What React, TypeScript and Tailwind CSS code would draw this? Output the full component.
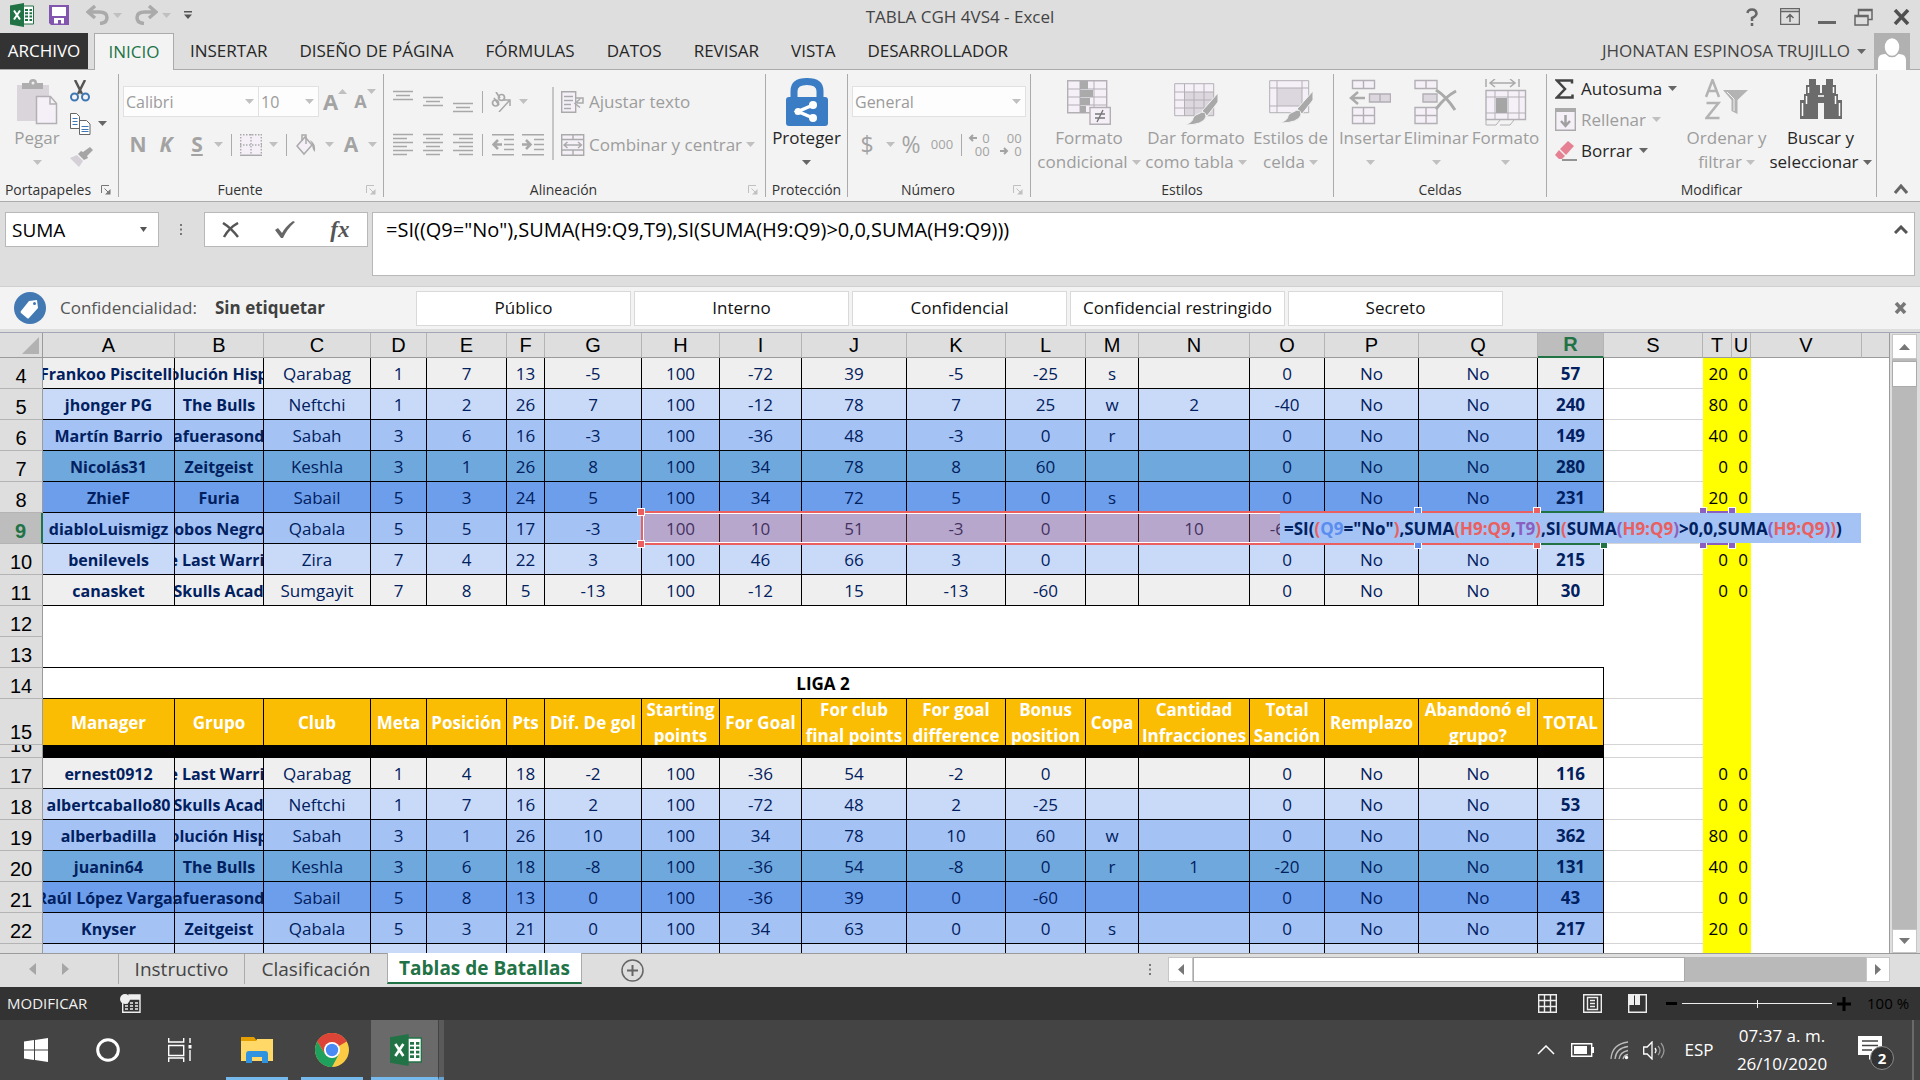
import React from 'react';

type Kids = { children?: React.ReactNode };

/* ---------- small shared parts ---------- */

function Caret({ dark = false }: { dark?: boolean }) {
  return (
    <svg width="9" height="5" viewBox="0 0 9 5" className="shrink-0" aria-hidden="true">
      <path d="M0 0h9L4.5 5z" fill={dark ? '#666' : '#c0c0c0'} />
    </svg>
  );
}

function Svg({ w, h, children }: Kids & { w: number; h: number }) {
  return (
    <svg width={w} height={h} viewBox={`0 0 ${w} ${h}`} fill="none" className="shrink-0" aria-hidden="true">
      {children}
    </svg>
  );
}

function ExcelLogo({ w, h }: { w: number; h: number }) {
  return (
    <svg width={w} height={h} viewBox="0 0 24 24" fill="none" className="shrink-0" aria-hidden="true">
      <path d="M13 3h10.500v18H13z" fill="#fff" stroke="#217346" strokeWidth="1" />
      <path d="M15 6h3v2h-3zM19.500 6h2.500v2h-2.500zM15 9.300h3v2h-3zM19.500 9.300h2.500v2h-2.500zM15 12.600h3v2h-3zM19.500 12.600h2.500v2h-2.500zM15 16h3v2h-3zM19.500 16h2.500v2h-2.500z" fill="#217346" />
      <path d="M0 2.500L14 0v24L0 21.500z" fill="#217346" />
      <path d="M4 7.500l6 9M10 7.500l-6 9" stroke="#fff" strokeWidth="2" />
    </svg>
  );
}

/* ---------- title bar ---------- */

function TitleBar() {
  return (
    <header className="grid h-[33px] shrink-0 grid-cols-[1fr_auto_1fr] items-center">
      <div className="flex items-center pl-[10px] pb-[3px]">
        <ExcelLogo w={24} h={24} />
        <button aria-label="Guardar" className="ml-[15px]">
          <Svg w={20} h={20}>
            <path d="M0 0h20v20H2l-2-2z" fill="#8255ae" />
            <path d="M3 2h14v9H3zM5 13h10v5.500H5z" fill="#fff" />
            <path d="M9 15h3v4H9z" fill="#8255ae" />
          </Svg>
        </button>
        <button aria-label="Deshacer" className="ml-[17px] flex items-center gap-1">
          <Svg w={23} h={20}>
            <path d="M9 1L2 7l7 6M3 7h10q8 0 8 5.500T14 18.500" stroke="#aaa" strokeWidth="3.500" />
          </Svg>
          <Caret />
        </button>
        <button aria-label="Rehacer" className="ml-[13px] flex items-center gap-1">
          <Svg w={23} h={20}>
            <path d="M14 1l7 6-7 6M20 7H10q-8 0-8 5.500T9 18.500" stroke="#aaa" strokeWidth="3.500" />
          </Svg>
          <Caret />
        </button>
        <button aria-label="Personalizar barra de acceso rápido" className="ml-[13px]">
          <Svg w={8} h={8}>
            <path d="M0 0h8v1.500H0zM0 3.500h8L4 8z" fill="#555" />
          </Svg>
        </button>
      </div>
      <h1 className="text-[17px] leading-6 text-[#444]">TABLA CGH 4VS4 - Excel</h1>
      <div className="flex items-center justify-end pr-[10px]">
        <button aria-label="Ayuda" className="mr-[22px]">
          <Svg w={12} h={18}>
            <path d="M1.500 5Q2 1.500 6 1.500T10.500 5.500Q10.500 8 6 10v3M6 15v3" stroke="#666" strokeWidth="2.500" />
          </Svg>
        </button>
        <button aria-label="Opciones de presentación de la cinta" className="mr-[18px]">
          <Svg w={20} h={17}>
            <path d="M.5.5h19v16H.5zM1 3.500h18M10 14V7M6.500 10L10 6.500 13.500 10" stroke="#666" strokeWidth="1.500" />
          </Svg>
        </button>
        <button aria-label="Minimizar" className="mr-[18px]">
          <Svg w={18} h={18}>
            <path d="M0 13h18v3H0z" fill="#666" />
          </Svg>
        </button>
        <button aria-label="Restaurar" className="mr-[20px]">
          <Svg w={19} h={18}>
            <path d="M1 7.500h13v9.500H1zM4.500 7V1.500h13.500v10H14M1 8.500h13M5 2.500h13" stroke="#666" strokeWidth="1.500" />
          </Svg>
        </button>
        <button aria-label="Cerrar">
          <Svg w={17} h={16}>
            <path d="M2 1l13 14M15 1L2 15" stroke="#505050" strokeWidth="3.500" />
          </Svg>
        </button>
      </div>
    </header>
  );
}

const ribbonTabs = ['INSERTAR', 'DISEÑO DE PÁGINA', 'FÓRMULAS', 'DATOS', 'REVISAR', 'VISTA', 'DESARROLLADOR'];

function RibbonTabs() {
  return (
    <nav className="flex h-[37px] shrink-0 items-stretch border-b border-[#ababab] text-[17px] text-[#262626]">
      <button className="w-[88px] bg-[#333] text-white">ARCHIVO</button>
      <button className="-mb-px ml-[6px] w-[80px] border border-b-0 border-[#ababab] bg-[#f3f3f3] text-[#217346]">INICIO</button>
      {ribbonTabs.map((t) => (
        <button key={t} className="px-4 whitespace-nowrap">
          {t}
        </button>
      ))}
      <button className="mr-[8px] ml-auto flex items-center gap-[7px] text-[17px] whitespace-nowrap text-[#444]">
        JHONATAN ESPINOSA TRUJILLO
        <Caret dark />
      </button>
      <div className="mr-[10px] -mb-px w-[36px] bg-[#b1b1b1]">
        <Svg w={36} h={37}>
          <path d="M4 37V27q0-6 7-6h14q7 0 7 6v10z" fill="#fff" />
          <ellipse cx="18" cy="14" rx="8" ry="9.500" fill="#fff" stroke="#b1b1b1" strokeWidth="1.500" />
        </Svg>
      </div>
    </nav>
  );
}

/* ---------- ribbon ---------- */

function Launcher({ dark = false }: { dark?: boolean }) {
  const c = dark ? '#777' : '#c0c0c0';
  return (
    <button aria-label="Más opciones" className="absolute right-[7px] bottom-[2px]">
      <Svg w={10} h={10}>
        <path d="M.5 8V.5H8M3.500 3.500L8 8" stroke={c} />
        <path d="M9.500 4v5.500H4z" fill={c} />
      </Svg>
    </button>
  );
}

function Group({ name, width, launcher, children }: Kids & { name: string; width: string; launcher?: 'dark' | 'light' }) {
  return (
    <section aria-label={name} className={`flex shrink-0 py-[4px] ${width}`}>
      <div className="relative flex min-w-0 flex-1 flex-col border-r border-[#ababab]">
        <div className="flex flex-1">{children}</div>
        <div className={`text-center text-[14px] leading-[14px] text-[#333] ${launcher ? 'pr-[22px]' : ''}`}>{name}</div>
        {launcher && <Launcher dark={launcher === 'dark'} />}
      </div>
    </section>
  );
}

function BigButton({ icon, top, bottom, width, dark = false }: { icon: React.ReactNode; top: string; bottom?: string; width: string; dark?: boolean }) {
  return (
    <button className={`flex shrink-0 flex-col items-center pt-[4px] text-[17px] leading-6 whitespace-nowrap ${dark ? 'text-[#262626]' : 'text-[#9d9d9d]'} ${width}`}>
      <span className="flex h-12 items-center">{icon}</span>
      <span>{top}</span>
      <span className="flex h-6 items-center gap-[4px]">
        {bottom}
        <Caret dark={dark} />
      </span>
    </button>
  );
}

function Cell({ label, width, children }: Kids & { label: string; width: string }) {
  return (
    <button aria-label={label} className={`flex h-8 shrink-0 items-center justify-center text-[#a3a3a3] ${width}`}>
      {children}
    </button>
  );
}

function Sep() {
  return <span className="h-[22px] w-px shrink-0 bg-[#ababab]" />;
}

function Lines({ rows, y = 1 }: { rows: number[][]; y?: number }) {
  return (
    <Svg w={20} h={24}>
      <path d={rows.map(([x, w], i) => `M${x} ${y + i * 4}.5h${w}`).join('')} stroke="#a8a8a8" strokeWidth="1.500" />
    </Svg>
  );
}

function Select({ label, value, width }: { label: string; value: string; width: string }) {
  return (
    <span className={`flex h-[31px] items-center border border-[#e1e1e1] bg-[#fdfdfd] pr-[4px] ${width}`}>
      <select aria-label={label} className="min-w-0 flex-1 appearance-none pl-[2px] text-[16px] leading-6 text-[#9b9b9b] outline-none">
        <option>{value}</option>
      </select>
      <Caret />
    </span>
  );
}

const pale = '#f5f0f8';
const line = '#b3afb5';

const icons = {
  paste: (
    <Svg w={42} h={46}>
      <path d="M1 6h32v36H1z" fill="#d9d5db" />
      <path d="M6 10V4h7q0-4 4-4t4 4h6v6z" fill="#aeaeae" />
      <circle cx="17" cy="4" r="1.500" fill="#eee" />
      <path d="M20.500 17.500h14l6 7v20h-20zM34 18v7h6" fill={pale} stroke={line} strokeWidth="1.500" />
    </Svg>
  ),
  cut: (
    <Svg w={20} h={22}>
      <path d="M5 0l7 14M15 0L8 14" stroke="#555" strokeWidth="2.500" />
      <circle cx="4.500" cy="17" r="3.500" stroke="#3e78b4" strokeWidth="2" />
      <circle cx="15.500" cy="17" r="3.500" stroke="#3e78b4" strokeWidth="2" />
    </Svg>
  ),
  copy: (
    <Svg w={21} h={22}>
      <path d="M.5.5h6l3 3v12h-9z" fill="#fff" stroke="#666" />
      <path d="M2.500 5.500h5M2.500 8.500h5M2.500 11.500h5" stroke="#3e78b4" />
      <path d="M9.500 7.500h7l3.500 3.500v10.500H9.500z" fill="#fff" stroke="#666" />
      <path d="M11.500 13.500h7M11.500 16.500h7M11.500 18.500h7" stroke="#3e78b4" />
    </Svg>
  ),
  brush: (
    <Svg w={23} h={20}>
      <path d="M20 0l3 3-6 6 1 2-4 2-6-6 3-3 2 1z" fill="#a5a5a5" />
      <path d="M7 8l6 6-4 6-9-9z" fill="#d5d0d7" />
    </Svg>
  ),
  lock: (
    <Svg w={42} h={48}>
      <path d="M8 22V13Q8 3.500 21 3.500t13 9.500v9" stroke="#3a7dc5" strokeWidth="7" />
      <rect y="19" width="42" height="29" rx="3" fill="#3a7dc5" />
      <path d="M27 27l-15 6.500L27 40" stroke="#fff" strokeWidth="3.500" />
      <circle cx="27" cy="27" r="4" fill="#fff" />
      <circle cx="27" cy="40" r="4" fill="#fff" />
      <circle cx="12" cy="33.500" r="3.500" fill="#fff" />
    </Svg>
  ),
  conditional: (
    <Svg w={44} h={45}>
      <path d="M.7.700h39v32H.7z" fill={pale} stroke={line} strokeWidth="1.400" />
      <path d="M.7 9h39M.7 17h39M.7 25h39M13 .7v32M27 .7v32" stroke={line} />
      <path d="M13 1h8v8h-8zM13 10h13v7H13zM13 18h10v7H13zM13 26h6v7h-6z" fill="#aaa" />
      <path d="M23 27.500h20.300v16.800H23z" fill={pale} stroke={line} strokeWidth="1.400" />
      <path d="M28 34h10M28 38h10M36 30l-6 12" stroke="#777" strokeWidth="1.400" />
    </Svg>
  ),
  tableFormat: (
    <Svg w={44} h={45}>
      <path d="M.7 3.700h39v32H.7z" fill={pale} />
      <path d="M11 12h29v24H11z" fill="#dcd7de" />
      <path d="M.7 3.700h39v32H.7zM.7 12h39M.7 20h39M.7 28h39M10.500 4v32M20 4v32M30 4v32" stroke={line} />
      <path d="M44 13v9L33 36l-5-5z" fill="#a9a9a9" stroke="#f3f3f3" />
      <path d="M24 34q8-5 8 3-3 8-21 8 8-3 8-7 1-3 5-4z" fill="#a9a9a9" stroke="#f3f3f3" />
    </Svg>
  ),
  cellStyle: (
    <Svg w={44} h={45}>
      <path d="M.7.700h39v32H.7z" fill={pale} />
      <path d="M8 8h25v18H8z" fill="#dcd7de" />
      <path d="M.7.700h39v32H.7zM.7 8h39M8 1v32M.7 26h39M33 1v32" stroke={line} />
      <path d="M44 11v9L33 34l-5-5z" fill="#a9a9a9" stroke="#f3f3f3" />
      <path d="M24 32q8-5 8 3-3 8-21 8 8-3 8-7 1-3 5-4z" fill="#a9a9a9" stroke="#f3f3f3" />
    </Svg>
  ),
  insert: (
    <Svg w={42} h={46}>
      <path d="M3.500 1.500h22v8h-22zM14.500 1.500v8M3.500 28.500h22v16h-22zM14.500 28.500v16M3.500 36.500h22" fill={pale} stroke={line} strokeWidth="1.400" />
      <path d="M20.500 15h21v8h-21zM31 15v8" fill="#dcd7de" stroke={line} strokeWidth="1.400" />
      <path d="M16 19H3M9 13l-7 6 7 6" stroke="#aaa" strokeWidth="2.500" />
    </Svg>
  ),
  remove: (
    <Svg w={44} h={46}>
      <path d="M1 1.500h22v8H1zM12 1.500v8M1 28.500h22v16H1zM12 28.500v16M1 36.500h22" fill={pale} stroke={line} strokeWidth="1.400" />
      <path d="M9 15h14v8H9z" fill="#dcd7de" stroke={line} strokeWidth="1.400" />
      <path d="M22 11q10 6 19 20M42 12Q31 18 22 30" stroke="#aaa" strokeWidth="3" />
    </Svg>
  ),
  format: (
    <Svg w={42} h={47}>
      <path d="M1 0v8M34 0v8M5 4h25M10 0L5 4l5 4M25 0l5 4-5 4" stroke="#aaa" strokeWidth="1.500" />
      <path d="M1 11.500h39.500v29H1z" fill={pale} stroke={line} strokeWidth="1.400" />
      <path d="M1 18h39M1 34h39M10 11v29M23 11v29M34 11v29" stroke={line} />
      <path d="M11 19h11v15H11z" fill="#a5a5a5" />
      <path d="M1 41v5h10l4-5M15 46h10l4-5" stroke={line} />
    </Svg>
  ),
  sortFilter: (
    <Svg w={43} h={46}>
      <path d="M1 18L7.500 1 14 18M3.500 12h8M1.500 24h12l-12 15h13" stroke="#b3b3b3" strokeWidth="2.500" />
      <path d="M18 11h25L32.500 21v14l-6-3V21z" fill="#b3b3b3" />
      <path d="M22 13l7 7v12" stroke="#f3f3f3" />
    </Svg>
  ),
  binoculars: (
    <Svg w={42} h={46}>
      <path d="M9 0h7v6h4v8h2V6h4V0h7v6h3v9h2v6h4v19H24V24h-6v16H0V21h4v-6h2V6h3z" fill="#6b6b6b" />
      <path d="M2.500 24v13M39.500 24v13M6.500 17v8M35.500 17v8M8.500 8v6M33.500 8v6M18 17h6" stroke="#fff" strokeWidth="1.500" />
    </Svg>
  ),
};

function ToolRow({ icon, text, dark = true }: { icon: React.ReactNode; text: string; dark?: boolean }) {
  return (
    <button className={`flex h-[31px] items-center whitespace-nowrap ${dark ? 'text-[#262626]' : 'text-[#9d9d9d]'}`}>
      <span className="flex w-[26px] items-center">{icon}</span>
      <span className="mr-[6px]">{text}</span>
      <Caret dark={dark} />
    </button>
  );
}

function Ribbon() {
  return (
    <div className="flex h-[132px] shrink-0 border-b border-[#ababab] bg-[#f3f3f3]">
      <Group name="Portapapeles" width="w-[119px]" launcher="dark">
        <BigButton icon={icons.paste} top="Pegar" width="ml-[4px] w-[66px]" />
        <div className="flex flex-col">
          <button aria-label="Cortar" className="flex h-[33px] items-center">{icons.cut}</button>
          <button aria-label="Copiar" className="flex h-[33px] items-center gap-[7px]">
            {icons.copy}
            <Caret dark />
          </button>
          <button aria-label="Copiar formato" className="flex h-[33px] items-center">{icons.brush}</button>
        </div>
      </Group>

      <Group name="Fuente" width="w-[265px]" launcher="light">
        <div className="flex flex-col pt-[6px]">
          <div className="flex h-[43px] items-center pl-[4px]">
            <Select label="Fuente" value="Calibri" width="w-[136px]" />
            <Select label="Tamaño de fuente" value="10" width="-ml-px w-[61px]" />
            <Cell label="Aumentar tamaño" width="w-[32px]">
              <span className="text-[22px] font-bold">A</span>
              <span className="mb-5 rotate-180"><Caret /></span>
            </Cell>
            <Cell label="Reducir tamaño" width="w-[28px]">
              <span className="text-[18px] font-bold">A</span>
              <span className="mb-5"><Caret /></span>
            </Cell>
          </div>
          <div className="flex h-[43px] items-center pl-[5px] text-[21px] font-bold">
            <Cell label="Negrita" width="w-[28px]">N</Cell>
            <Cell label="Cursiva" width="w-[28px] italic">K</Cell>
            <Cell label="Subrayado" width="w-[34px] underline">S</Cell>
            <Caret />
            <span className="w-[8px]" />
            <Sep />
            <Cell label="Bordes" width="w-[37px]">
              <Svg w={22} h={22}>
                <path d="M.5.500h21v21H.5z" fill={pale} />
                <path d="M.7 0v21M21.300 0v21M11 0v21M0 .7h22M0 11h22" stroke="#aaa" strokeWidth="1.400" strokeDasharray="1.500 1.500" />
                <path d="M0 21.300h22" stroke="#aaa" strokeWidth="1.500" />
              </Svg>
            </Cell>
            <Caret />
            <span className="w-[8px]" />
            <Sep />
            <Cell label="Color de relleno" width="w-[38px]">
              <Svg w={20} h={22}>
                <path d="M1 12L9 3l7 8-8 9z" fill={pale} stroke="#aaa" strokeWidth="1.500" />
                <path d="M6 7V1h4v9" stroke="#aaa" strokeWidth="1.500" />
                <path d="M14 6q6 3 5 12-3-3-3-8z" fill="#aaa" />
              </Svg>
            </Cell>
            <Caret />
            <Cell label="Color de fuente" width="w-[34px]">A</Cell>
            <Caret />
          </div>
        </div>
      </Group>

      <Group name="Alineación" width="w-[382px]" launcher="light">
        <div className="flex pt-[6px]">
          <div className="w-[168px] pl-[4px]">
            <div className="flex h-[43px] items-center">
              <Cell label="Alinear arriba" width="w-[30px]"><Lines y={1} rows={[[0, 20], [3, 14], [0, 20]]} /></Cell>
              <Cell label="Alinear en el medio" width="w-[30px]"><Lines y={7} rows={[[0, 20], [3, 14], [0, 20]]} /></Cell>
              <Cell label="Alinear abajo" width="w-[30px]"><Lines y={13} rows={[[0, 20], [3, 14], [0, 20]]} /></Cell>
              <span className="w-[4px]" />
              <Sep />
              <Cell label="Orientación" width="w-[36px]">
                <Svg w={20} h={20}>
                  <path d="M8 20L18 9M13 8l6 0v6" stroke="#a8a8a8" strokeWidth="1.500" />
                  <circle cx="4.500" cy="11" r="3" stroke="#a8a8a8" strokeWidth="1.700" />
                  <circle cx="10.500" cy="5.500" r="3" stroke="#a8a8a8" strokeWidth="1.700" />
                  <path d="M3 6l5 7M5 0l4 6" stroke="#a8a8a8" strokeWidth="1.700" />
                </Svg>
              </Cell>
              <Caret />
            </div>
            <div className="flex h-[43px] items-center">
              <Cell label="Alinear a la izquierda" width="w-[30px]"><Lines rows={[[0, 20], [0, 14], [0, 20], [0, 14], [0, 20], [0, 14]]} /></Cell>
              <Cell label="Centrar" width="w-[30px]"><Lines rows={[[0, 20], [3, 14], [0, 20], [3, 14], [0, 20], [3, 14]]} /></Cell>
              <Cell label="Alinear a la derecha" width="w-[30px]"><Lines rows={[[0, 20], [6, 14], [0, 20], [6, 14], [0, 20], [6, 14]]} /></Cell>
              <span className="w-[4px]" />
              <Sep />
              <span className="w-[5px]" />
              <Cell label="Disminuir sangría" width="w-[30px]">
                <Svg w={22} h={22}>
                  <path d="M0 .7h22M12 5.500h10M12 10.500h10M12 15.500h10M0 20.700h22" stroke="#a8a8a8" strokeWidth="1.400" />
                  <path d="M10 10.500H2M6 6l-4.500 4.500L6 15" stroke="#a8a8a8" strokeWidth="2.500" />
                </Svg>
              </Cell>
              <Cell label="Aumentar sangría" width="w-[30px]">
                <Svg w={22} h={22}>
                  <path d="M0 .7h22M12 5.500h10M12 10.500h10M12 15.500h10M0 20.700h22" stroke="#a8a8a8" strokeWidth="1.400" />
                  <path d="M0 10.500h8M4 6l4.500 4.500L4 15" stroke="#a8a8a8" strokeWidth="2.500" />
                </Svg>
              </Cell>
            </div>
          </div>
          <span className="mt-[7px] h-[73px] w-[2px] bg-[#c6c6c6]" />
          <div className="pl-[7px] text-[17px] text-[#9d9d9d]">
            <button className="flex h-[43px] items-center gap-[4px] whitespace-nowrap">
              <Svg w={24} h={22}>
                <path d="M.7.700h14v20.600H.7z" fill={pale} stroke="#aaa" strokeWidth="1.400" />
                <path d="M3 5.500h9M3 9.500h9M3 13.500h7M3 17.500h7M14 7h8v5h-6M19 8l-5 4.500 5 4" stroke="#aaa" strokeWidth="1.500" />
              </Svg>
              Ajustar texto
            </button>
            <button className="flex h-[43px] items-center gap-[4px] whitespace-nowrap">
              <Svg w={24} h={22}>
                <path d="M.7.700h22v20.600H.7zM.7 5.500h22M.7 16h22M12 1v5M12 16v5" fill={pale} stroke="#aaa" strokeWidth="1.400" />
                <path d="M3 11h17M6.500 8L3 11l3.500 3M17 8l3.500 3-3.500 3" stroke="#aaa" strokeWidth="1.400" />
              </Svg>
              Combinar y centrar
              <Caret />
            </button>
          </div>
        </div>
      </Group>

      <Group name="Protección" width="w-[82px]">
        <BigButton icon={icons.lock} top="Proteger" width="w-full" dark />
      </Group>

      <Group name="Número" width="w-[183px]" launcher="light">
        <div className="flex flex-col pt-[6px]">
          <div className="flex h-[43px] items-center pl-[4px]">
            <Select label="Formato de número" value="General" width="w-[174px]" />
          </div>
          <div className="flex h-[43px] items-center text-[23px]">
            <Cell label="Formato de número de contabilidad" width="w-[38px]">$</Cell>
            <Caret />
            <Cell label="Estilo porcentual" width="w-[32px]">%</Cell>
            <Cell label="Estilo millares" width="w-[30px] text-[13px]">000</Cell>
            <span className="w-[4px]" />
            <Sep />
            <Cell label="Aumentar decimales" width="w-[34px]">
              <span className="flex flex-col items-end text-[13px] leading-[13px]">
                <span className="flex items-center gap-[5px]">
                  <Svg w={9} h={8}><path d="M9 4H2M5 1L2 4l3 3" stroke="#a3a3a3" strokeWidth="2" /></Svg>0
                </span>
                <span>00</span>
              </span>
            </Cell>
            <Cell label="Disminuir decimales" width="w-[30px]">
              <span className="flex flex-col items-end text-[13px] leading-[13px]">
                <span>00</span>
                <span className="flex items-center gap-[5px]">
                  <Svg w={9} h={8}><path d="M0 4h7M4 1l3 3-3 3" stroke="#a3a3a3" strokeWidth="2" /></Svg>0
                </span>
              </span>
            </Cell>
          </div>
        </div>
      </Group>

      <Group name="Estilos" width="w-[303px]">
        <BigButton icon={icons.conditional} top="Formato" bottom="condicional" width="ml-[3px] w-[110px]" />
        <BigButton icon={icons.tableFormat} top="Dar formato" bottom="como tabla" width="w-[104px]" />
        <BigButton icon={icons.cellStyle} top="Estilos de" bottom="celda" width="w-[85px]" />
      </Group>

      <Group name="Celdas" width="w-[213px]">
        <BigButton icon={icons.insert} top="Insertar" width="ml-[3px] w-[66px]" />
        <BigButton icon={icons.remove} top="Eliminar" width="w-[66px]" />
        <BigButton icon={icons.format} top="Formato" width="w-[73px]" />
      </Group>

      <Group name="Modificar" width="w-[330px]">
        <div className="-mt-px flex w-[137px] flex-col pl-[8px] text-[17px]">
          <ToolRow
            text="Autosuma"
            icon={
              <Svg w={19} h={20}>
                <path d="M17 4.500V1.500H2l8 8.500-8 8.500h15.500v-3" stroke="#444" strokeWidth="2.500" />
              </Svg>
            }
          />
          <ToolRow
            text="Rellenar"
            dark={false}
            icon={
              <Svg w={21} h={23}>
                <path d="M.7.700h19.600v21.600H.7z" fill={pale} stroke="#aaa" strokeWidth="1.400" />
                <path d="M0 0h21v4H0z" fill="#aaa" />
                <path d="M10.500 7v11M6 13l4.500 5 4.500-5" stroke="#a0a0a0" strokeWidth="2.500" />
              </Svg>
            }
          />
          <ToolRow
            text="Borrar"
            icon={
              <Svg w={22} h={20}>
                <path d="M13 0l6 5-8 9-6-6z" fill="#e68193" />
                <path d="M4 9l6 6-3 3H4l-4-4z" fill="#e68193" />
                <path d="M7 19h15" stroke="#555" strokeWidth="1.200" />
              </Svg>
            }
          />
        </div>
        <BigButton icon={icons.sortFilter} top="Ordenar y" bottom="filtrar" width="w-[85px]" />
        <BigButton icon={icons.binoculars} top="Buscar y" bottom="seleccionar" width="w-[103px]" dark />
      </Group>

      <button aria-label="Contraer la cinta" className="ml-auto flex items-end pr-[12px] pb-[7px]">
        <Svg w={14} h={10}>
          <path d="M1 9l6-7 6 7" stroke="#666" strokeWidth="3" />
        </Svg>
      </button>
    </div>
  );
}

/* ---------- formula bar ---------- */

function Dots() {
  return (
    <Svg w={3} h={11}>
      <path d="M0 0h2v2H0zM0 4.500h2v2H0zM0 9h2v2H0z" fill="#777" />
    </Svg>
  );
}

function FormulaBar() {
  return (
    <div className="flex h-[84px] shrink-0 items-start px-[5px] pt-[10px]">
      <div className="flex h-[35px] w-[154px] items-center border border-[#b8b8b8] bg-white pr-[11px]">
        <input aria-label="Cuadro de nombres" defaultValue="SUMA" className="min-w-0 flex-1 pl-[6px] text-[19px] leading-[28px] text-black outline-none" />
        <button aria-label="Nombres definidos">
          <Svg w={7} h={5}><path d="M0 0h7L3.500 5z" fill="#555" /></Svg>
        </button>
      </div>
      <div className="flex h-[35px] w-[45px] items-center justify-center"><Dots /></div>
      <div className="flex h-[35px] w-[164px] items-center justify-around border border-[#b8b8b8] bg-white">
        <button aria-label="Cancelar">
          <Svg w={18} h={16}><path d="M1 1q8 5 15 14M16 1Q7 6 2 15" stroke="#555" strokeWidth="2.500" /></Svg>
        </button>
        <button aria-label="Introducir">
          <Svg w={20} h={18}><path d="M0 9l3-2 4 5Q11 5 18 0l2 1Q12 8 8 17H6z" fill="#666" /></Svg>
        </button>
        <button aria-label="Insertar función" className="font-[Liberation_Serif,serif] text-[23px] leading-6 font-bold text-[#555] italic">fx</button>
      </div>
      <div className="ml-[4px] flex h-[64px] flex-1 items-start border border-[#b8b8b8] bg-white">
        <textarea
          aria-label="Barra de fórmulas"
          className="h-full flex-1 resize-none overflow-hidden pt-[3px] pl-[13px] text-[20px] leading-[28px] text-black outline-none"
          defaultValue={'=SI((Q9="No"),SUMA(H9:Q9,T9),SI(SUMA(H9:Q9)>0,0,SUMA(H9:Q9)))'}
        />
        <button aria-label="Contraer barra de fórmulas" className="mt-[12px] mr-[6px]">
          <Svg w={14} h={9}><path d="M1 8l6-6 6 6" stroke="#555" strokeWidth="3" /></Svg>
        </button>
      </div>
    </div>
  );
}

const labels = ['Público', 'Interno', 'Confidencial', 'Confidencial restringido', 'Secreto'];

function SensitivityBar() {
  return (
    <div className="flex h-[43px] shrink-0 items-center border-t border-[#d0d0d0] bg-[#f3f3f3] pr-[13px] pl-[14px] text-[17px]">
      <Svg w={32} h={32}>
        <circle cx="16" cy="16" r="16" fill="#4379b3" />
        <path d="M15 9l8-1 1 8-9 10q-1 1-2 0l-6-5q-1-1 0-2z" fill="#fff" />
        <circle cx="20.500" cy="11.500" r="1.500" fill="#4379b3" />
      </Svg>
      <span className="ml-[14px] w-[155px] text-[#555]">Confidencialidad:</span>
      <span className="w-[201px] font-bold text-[#404040]">Sin etiquetar</span>
      <div className="flex gap-[3px]">
        {labels.map((l) => (
          <button key={l} className="h-[35px] w-[215px] border border-[#d9d9d9] bg-white whitespace-nowrap text-[#111]">
            {l}
          </button>
        ))}
      </div>
      <button aria-label="Cerrar barra" className="ml-auto">
        <Svg w={13} h={12}><path d="M2 1l9 10M11 1L2 11" stroke="#777" strokeWidth="3.500" /></Svg>
      </button>
    </div>
  );
}

/* ---------- sheet ---------- */

const widths = [43, 132, 89, 107, 56, 80, 38, 97, 78, 82, 105, 99, 80, 53, 111, 75, 94, 119, 66, 99, 29, 19, 111, 28];
const letters = 'ABCDEFGHIJKLMNOPQRSTUV'.split('');

const fills = ['bg-[#efefef]', 'bg-[#c9daf8]', 'bg-[#a4c2f4]', 'bg-[#6fa8dc]', 'bg-[#6d9eeb]', 'bg-[#a4c2f4]', 'bg-[#c9daf8]', 'bg-[#efefef]'];

const liga1: string[][] = [
  'Frankoo Piscitelli|Revolución Hispana|Qarabag|1|7|13|-5|100|-72|39|-5|-25|s||0|No|No|57|20|0',
  'jhonger PG|The Bulls|Neftchi|1|2|26|7|100|-12|78|7|25|w|2|-40|No|No|240|80|0',
  'Martín Barrio|Lafuerasonda|Sabah|3|6|16|-3|100|-36|48|-3|0|r||0|No|No|149|40|0',
  'Nicolás31|Zeitgeist|Keshla|3|1|26|8|100|34|78|8|60|||0|No|No|280|0|0',
  'ZhieF|Furia|Sabail|5|3|24|5|100|34|72|5|0|s||0|No|No|231|20|0',
  'diabloLuismigz|Lobos Negros|Qabala|5|5|17|-3|100|10|51|-3|0||10|-600|||||',
  'benilevels|The Last Warriors|Zira|7|4|22|3|100|46|66|3|0|||0|No|No|215|0|0',
  'canasket|The Skulls Academy|Sumgayit|7|8|5|-13|100|-12|15|-13|-60|||0|No|No|30|0|0',
].map((r) => r.split('|'));

const liga2: string[][] = [
  'ernest0912|The Last Warriors|Qarabag|1|4|18|-2|100|-36|54|-2|0|||0|No|No|116|0|0',
  'albertcaballo80|The Skulls Academy|Neftchi|1|7|16|2|100|-72|48|2|-25|||0|No|No|53|0|0',
  'alberbadilla|Revolución Hispana|Sabah|3|1|26|10|100|34|78|10|60|w||0|No|No|362|80|0',
  'juanin64|The Bulls|Keshla|3|6|18|-8|100|-36|54|-8|0|r|1|-20|No|No|131|40|0',
  'Raúl López Vargas|Lafuerasonda|Sabail|5|8|13|0|100|-36|39|0|-60|||0|No|No|43|0|0',
  'Knyser|Zeitgeist|Qabala|5|3|21|0|100|34|63|0|0|s||0|No|No|217|20|0',
  '|||||||||||||||||||',
].map((r) => r.split('|'));

const heads = ['Manager', 'Grupo', 'Club', 'Meta', 'Posición', 'Pts', 'Dif. De gol', 'Starting\npoints', 'For Goal', 'For club\nfinal points', 'For goal\ndifference', 'Bonus\nposition', 'Copa', 'Cantidad\nInfracciones', 'Total\nSanción', 'Remplazo', 'Abandonó el\ngrupo?', 'TOTAL'];

function RowHead({ n, active = false, height = 'h-[31px]' }: { n: number; active?: boolean; height?: string }) {
  return (
    <th scope="row" className={`border-b border-b-[#b4b4b4] p-0 ${active ? 'border-r-2 border-r-[#217346] bg-[#bdbdbd] font-bold text-[#217346]' : 'border-r border-r-[#9b9b9b] bg-[#dedede] font-normal text-black'}`}>
      <div className={`-mb-px flex items-end justify-center overflow-hidden font-[Liberation_Sans,sans-serif] text-[20px] leading-[26px] ${height}`}>{n}</div>
    </th>
  );
}

function SideCells({ rule, t = '', u = '' }: { rule: boolean; t?: string; u?: string }) {
  return (
    <>
      <td className={rule ? 'border-b border-[#d4d4d4]' : ''} />
      <td className="bg-[#ffff00] p-0 pr-[4px] text-right leading-[26px] text-black">{t}</td>
      <td className="bg-[#ffff00] p-0 pr-[3px] text-right leading-[26px] text-black">{u}</td>
      <td />
      <td />
    </>
  );
}

function DataRow({ n, cells, fill, rule = true }: { n: number; cells: string[]; fill: string; rule?: boolean }) {
  return (
    <tr>
      <RowHead n={n} active={n === 9} />
      {cells.slice(0, 18).map((c, i) => (
        <td key={i} className={`border-r border-b border-black p-0 text-[#002060] ${fill}`}>
          <div className={`flex h-[30px] items-center justify-center overflow-hidden pt-px whitespace-nowrap ${i < 2 ? 'text-[16px] font-bold' : i === 17 ? 'font-bold' : ''}`}>{c}</div>
        </td>
      ))}
      <SideCells rule={rule} t={cells[18]} u={cells[19]} />
    </tr>
  );
}

function Handle({ at }: { at: string }) {
  return <span className={`absolute border border-white ${at}`} />;
}

/* Coloured outlines of the ranges that the formula in R9 refers to, and the open cell editor. */
function FormulaOverlay() {
  return (
    <>
      <div className="absolute top-[178px] left-[641px] h-[34px] w-[898px] border-2 border-[#ea5f60]">
        <div className="h-full border border-white bg-[#eb6064]/28" />
      </div>
      <div className="absolute top-[178px] left-[1539px] h-[34px] w-[65px] border-2 border-[#217346]" />
      <div className="absolute top-[178px] left-[1703px] h-[34px] w-[30px] border-2 border-[#8b5fc0]" />
      <div className="absolute top-[180px] left-[1280px] flex h-[30px] w-[581px] items-center bg-[#a4c2f4] pt-px pl-[4px] text-[17px] leading-[26px] font-bold whitespace-nowrap text-[#002060]">
        <span>
          =SI(<i className="text-[#ea5f60] not-italic">(</i>
          <i className="text-[#5b8df0] not-italic">Q9</i>="No"<i className="text-[#ea5f60] not-italic">)</i>,SUMA
          <i className="text-[#ea5f60] not-italic">(H9:Q9</i>,<i className="text-[#8b5fc0] not-italic">T9</i>
          <i className="text-[#ea5f60] not-italic">)</i>,SI<i className="text-[#ea5f60] not-italic">(</i>SUMA
          <i className="text-[#8b5fc0] not-italic">(</i>
          <i className="text-[#ea5f60] not-italic">H9:Q9</i>
          <i className="text-[#8b5fc0] not-italic">)</i>&gt;0,0,SUMA<i className="text-[#8b5fc0] not-italic">(</i>
          <i className="text-[#ea5f60] not-italic">H9:Q9</i>
          <i className="text-[#8b5fc0] not-italic">)</i>
          <i className="text-[#ea5f60] not-italic">)</i>)
        </span>
      </div>
      <Handle at="top-[175px] left-[637px] size-[8px] bg-[#ea5f60]" />
      <Handle at="top-[207px] left-[637px] size-[8px] bg-[#ea5f60]" />
      <Handle at="top-[174px] left-[1414px] h-[6px] w-[8px] border-b-0 bg-[#5b8df0]" />
      <Handle at="top-[210px] left-[1414px] h-[6px] w-[8px] border-t-0 bg-[#5b8df0]" />
      <Handle at="top-[174px] left-[1533px] h-[6px] w-[8px] border-b-0 bg-[#ea5f60]" />
      <Handle at="top-[210px] left-[1533px] h-[6px] w-[8px] border-t-0 bg-[#ea5f60]" />
      <Handle at="top-[210px] left-[1600px] h-[6px] w-[8px] border-t-0 bg-[#217346]" />
      <Handle at="top-[174px] left-[1699px] h-[6px] w-[8px] border-b-0 bg-[#8b5fc0]" />
      <Handle at="top-[210px] left-[1699px] h-[6px] w-[8px] border-t-0 bg-[#8b5fc0]" />
      <Handle at="top-[174px] left-[1728px] h-[6px] w-[8px] border-b-0 bg-[#8b5fc0]" />
      <Handle at="top-[210px] left-[1728px] h-[6px] w-[8px] border-t-0 bg-[#8b5fc0]" />
    </>
  );
}

function Sheet() {
  return (
    <div className="relative min-w-0 flex-1 overflow-hidden border-r border-[#9b9b9b] bg-white">
      <table className="w-[1890px] table-fixed border-separate border-spacing-0 text-[17px]">
        <colgroup>
          {widths.map((w, i) => (
            <col key={i} style={{ width: w }} />
          ))}
        </colgroup>
        <thead>
          <tr className="font-[Liberation_Sans,sans-serif] text-[20px]">
            <th className="border-r border-b border-[#9b9b9b] bg-[#dedede] p-0">
              <div className="flex h-[24px] items-end justify-end pr-[3px] pb-[3px]">
                <Svg w={17} h={17}><path d="M17 0v17H0z" fill="#b2b2b2" /></Svg>
              </div>
            </th>
            {letters.map((l) => (
              <th
                key={l}
                scope="col"
                className={`border-r border-r-[#b4b4b4] p-0 leading-[23px] ${l === 'R' ? 'border-b-2 border-b-[#217346] bg-[#bdbdbd] font-bold text-[#217346]' : 'border-b border-b-[#9b9b9b] bg-[#dedede] font-normal text-black'}`}
              >
                {l}
              </th>
            ))}
            <th className="border-b border-[#9b9b9b] bg-[#dedede] p-0" />
          </tr>
        </thead>
        <tbody>
          {liga1.map((r, i) => (
            <DataRow key={i} n={i + 4} cells={r} fill={fills[i]} rule={i < 7} />
          ))}
          <tr>
            <RowHead n={12} />
            <td colSpan={18} />
            <SideCells rule={false} />
          </tr>
          <tr>
            <RowHead n={13} />
            <td colSpan={18} className="border-b border-black" />
            <SideCells rule={false} />
          </tr>
          <tr>
            <RowHead n={14} />
            <td colSpan={18} className="border-r border-b border-black p-0 pt-px text-center leading-[26px] font-bold text-black">LIGA 2</td>
            <SideCells rule />
          </tr>
          <tr>
            <RowHead n={15} height="h-[46px]" />
            {heads.map((h) => (
              <th key={h} className="border-r border-black bg-[#fbbc04] p-0 text-white">
                <div className="flex h-[45px] items-center justify-center overflow-hidden pt-px text-center leading-[26px] font-bold whitespace-pre">{h}</div>
              </th>
            ))}
            <SideCells rule />
          </tr>
          <tr>
            <RowHead n={16} height="h-[13px]" />
            <td colSpan={18} className="bg-black p-0" />
            <td className="border-b border-[#d4d4d4] p-0" />
            <td className="bg-[#ffff00] p-0" />
            <td className="bg-[#ffff00] p-0" />
            <td className="p-0" />
            <td className="p-0" />
          </tr>
          {liga2.map((r, i) => (
            <DataRow key={i} n={i + 17} cells={r} fill={i === 6 ? 'bg-[#c9daf8]' : fills[i]} />
          ))}
        </tbody>
      </table>
      <FormulaOverlay />
    </div>
  );
}

function VerticalScroll() {
  return (
    <div className="flex w-[30px] shrink-0 flex-col items-start pt-px pl-[2px]">
      <button aria-label="Desplazar arriba" className="flex h-[25px] w-[25px] items-center justify-center border border-[#c6c6c6] bg-white">
        <Svg w={11} h={6}><path d="M0 6h11L5.500 0z" fill="#777" /></Svg>
      </button>
      <div className="w-[25px] flex-1 bg-[#b9b9b9] pt-[2px]">
        <div className="h-[26px] border border-[#ababab] bg-white" />
      </div>
      <button aria-label="Desplazar abajo" className="flex h-[24px] w-[25px] items-center justify-center border border-[#c6c6c6] bg-white">
        <Svg w={11} h={6}><path d="M0 0h11L5.500 6z" fill="#777" /></Svg>
      </button>
    </div>
  );
}

function SheetTabs() {
  return (
    <div className="flex h-[34px] shrink-0 items-start border-t border-[#9b9b9b] text-[19px] text-[#444]">
      <div className="flex h-[30px] w-[119px] items-center gap-[26px] border-r border-[#ababab] pl-[29px]">
        <button aria-label="Hoja anterior"><Svg w={7} h={12}><path d="M7 0v12L0 6z" fill="#a6a6a6" /></Svg></button>
        <button aria-label="Hoja siguiente"><Svg w={7} h={12}><path d="M0 0v12l7-6z" fill="#a6a6a6" /></Svg></button>
      </div>
      <button className="h-[30px] w-[126px] border-r border-[#ababab] pb-px leading-[26px]">Instructivo</button>
      <button className="h-[30px] w-[142px] pb-px leading-[26px]">Clasificación</button>
      <button className="-mt-px h-[31px] w-[195px] border-x border-b-2 border-x-[#ababab] border-b-[#217346] bg-white leading-[28px] font-bold text-[#217346]">Tablas de Batallas</button>
      <button aria-label="Hoja nueva" className="mt-[5px] ml-[39px]">
        <Svg w={23} h={23}>
          <circle cx="11.500" cy="11.500" r="10.500" stroke="#666" strokeWidth="1.500" />
          <path d="M11.500 6v11M6 11.500h11" stroke="#666" strokeWidth="2" />
        </Svg>
      </button>
      <div className="ml-auto flex items-center pt-[3px] pr-[30px]">
        <Dots />
        <button aria-label="Desplazar a la izquierda" className="ml-[16px] flex h-[25px] w-[25px] items-center justify-center border border-[#c6c6c6] bg-white">
          <Svg w={6} h={11}><path d="M6 0v11L0 5.500z" fill="#777" /></Svg>
        </button>
        <div className="h-[25px] w-[673px] bg-[#b9b9b9]">
          <div className="h-full w-[492px] border border-[#ababab] bg-white" />
        </div>
        <button aria-label="Desplazar a la derecha" className="flex h-[25px] w-[24px] items-center justify-center border border-[#c6c6c6] bg-white">
          <Svg w={6} h={11}><path d="M0 0v11l6-5.500z" fill="#777" /></Svg>
        </button>
      </div>
    </div>
  );
}

function StatusBar() {
  return (
    <div className="flex h-[33px] shrink-0 items-center bg-[#333] pr-[9px] pl-[7px] text-[15px] text-[#f0f0f0]">
      <span className="w-[113px]">MODIFICAR</span>
      <button aria-label="Grabar macro">
        <Svg w={21} h={19}>
          <path d="M2.700 4.700H20v13.600H2.700zM9 1h11v4H9z" stroke="#eee" strokeWidth="1.400" />
          <path d="M9 1h11v4H9z" fill="#eee" />
          <path d="M5 9h3M10 9h3M15 9h3M5 12h3M10 12h3M15 12h3M5 15h3M10 15h3M15 15h3" stroke="#eee" strokeWidth="1.400" />
          <circle cx="5" cy="5" r="5" fill="#eee" />
        </Svg>
      </button>
      <div className="ml-auto flex items-center">
        <button aria-label="Normal" className="mr-[26px]">
          <Svg w={19} h={19}><path d="M.7.700h17.600v17.600H.7zM6.500.700v17.600M12.500.700v17.600M.7 6.500h17.600M.7 12.500h17.600" stroke="#eee" strokeWidth="1.400" /></Svg>
        </button>
        <button aria-label="Diseño de página" className="mr-[26px]">
          <Svg w={19} h={19}><path d="M.7.700h17.600v17.600H.7zM4.500 3.500h10v12h-10zM7 6.500h5M7 9.500h5M7 12.500h5" stroke="#eee" strokeWidth="1.400" /></Svg>
        </button>
        <button aria-label="Vista previa de salto de página" className="mr-[19px]">
          <Svg w={19} h={19}>
            <path d="M.7.700h17.600v17.600H.7z" stroke="#eee" strokeWidth="1.400" />
            <path d="M1 1h5v10H1zM7 1h5v10H7z" fill="#eee" />
          </Svg>
        </button>
        <button aria-label="Alejar" className="mr-[5px]"><Svg w={11} h={11}><path d="M0 4h11v3H0z" fill="#000" /></Svg></button>
        <input
          type="range"
          aria-label="Zoom"
          defaultValue={50}
          className="h-px w-[150px] appearance-none bg-[#eee] [&::-webkit-slider-thumb]:h-[8px] [&::-webkit-slider-thumb]:w-px [&::-webkit-slider-thumb]:appearance-none [&::-webkit-slider-thumb]:bg-[#eee]"
        />
        <button aria-label="Acercar" className="mr-[16px] ml-[5px]"><Svg w={14} h={14}><path d="M0 5.500h14v3H0zM5.500 0h3v14h-3z" fill="#000" /></Svg></button>
        <span className="w-[44px] whitespace-nowrap text-black">100 %</span>
      </div>
    </div>
  );
}

/* ---------- taskbar ---------- */

function Taskbar() {
  return (
    <footer className="flex h-[60px] shrink-0 items-stretch bg-[#444] text-[17px] text-white">
      <button aria-label="Inicio" className="flex w-[72px] items-center justify-center">
        <Svg w={24} h={24}><path d="M0 3.500L10 2v9.500H0zM11 1.900L24 0v11.500H11zM0 12.500h10V22L0 20.500zM11 12.500h13V24l-13-1.900z" fill="#fff" /></Svg>
      </button>
      <button aria-label="Cortana" className="flex w-[72px] items-center justify-center">
        <Svg w={24} h={24}><circle cx="12" cy="12" r="10.300" stroke="#fff" strokeWidth="3" /></Svg>
      </button>
      <button aria-label="Vista de tareas" className="flex w-[72px] items-center justify-center">
        <Svg w={24} h={24}>
          <path d="M.7 0v4h15V0M.7 7.500h15v10H.7zM.7 24v-4h15v4M22 0v5M22 12v11" stroke="#fff" strokeWidth="1.400" />
          <path d="M20.500 7h3v3.500h-3z" fill="#fff" />
        </Svg>
      </button>
      <button aria-label="Explorador de archivos" className="ml-[10px] flex w-[62px] items-center justify-center border-b-3 border-[#76b9ed] pt-[3px]">
        <Svg w={32} h={27}>
          <path d="M0 0h13l3 4H0z" fill="#e5a000" />
          <path d="M0 4h15l1-2h16v22H0z" fill="#ffd867" />
          <path d="M5 26V17q0-3 3-3h16q3 0 3 3v9h-6v-6H11v6z" fill="#2f93e0" />
        </Svg>
      </button>
      <button aria-label="Chrome" className="ml-[13px] flex w-[62px] items-center justify-center border-b-3 border-[#76b9ed] pt-[3px]">
        <Svg w={34} h={34}>
          <circle cx="17" cy="17" r="17" fill="#fbcb43" />
          <path d="M17 17L2.300 8.500A17 17 0 0 1 31.700 8.500z" fill="#dc4437" />
          <path d="M17 9h14.700A17 17 0 0 0 2.300 8.500L10 21z" fill="#dc4437" />
          <path d="M2.300 8.500A17 17 0 0 0 17 34l7-13-7 4-7-4z" fill="#1fa15d" />
          <circle cx="17" cy="17" r="8" fill="#fff" />
          <circle cx="17" cy="17" r="6.200" fill="#4a8af4" />
        </Svg>
      </button>
      <button aria-label="Excel" className="ml-[8px] flex w-[67px] items-center justify-center border-b-3 border-[#76b9ed] bg-[#6a6a6a] pt-[3px] pl-[3px]">
        <ExcelLogo w={32} h={32} />
      </button>
      <span className="w-[6px] border-b-3 border-l border-b-[#69a3d1] border-l-[#444] bg-[#5a5a5a]" />
      <div className="ml-auto flex items-center">
        <button aria-label="Mostrar iconos ocultos" className="mr-[16px]">
          <Svg w={18} h={10}><path d="M1 9l8-8 8 8" stroke="#fff" strokeWidth="1.500" /></Svg>
        </button>
        <button aria-label="Batería" className="mr-[16px]">
          <Svg w={23} h={14}>
            <path d="M.7.700h20v12.600H.7z" stroke="#fff" strokeWidth="1.400" />
            <path d="M3 3h13v8H3zM21 4h2v6h-2z" fill="#fff" />
          </Svg>
        </button>
        <button aria-label="Red" className="mr-[14px]">
          <Svg w={19} h={19}>
            <path d="M1 18Q2 3 18 1M5 18Q6 7 18 5.500M9 18Q10 11 18 9.500M13 18q1-4 5-4.500" stroke="#bbb" strokeWidth="1.300" />
            <circle cx="16.500" cy="16.500" r="1.700" fill="#fff" />
          </Svg>
        </button>
        <button aria-label="Volumen" className="mr-[18px]">
          <Svg w={23} h={19}>
            <path d="M.7 6h3.500L9 1v17l-4.800-5H.7z" stroke="#fff" strokeWidth="1.300" />
            <path d="M12 7q2 2.500 0 5" stroke="#fff" strokeWidth="1.300" />
            <path d="M15 5q4 4.500 0 9M18 2q6 7.500 0 15" stroke="#999" strokeWidth="1.300" />
          </Svg>
        </button>
        <button className="w-[30px] whitespace-nowrap">ESP</button>
        <button className="mr-[18px] ml-[10px] w-[116px] text-center leading-[28px]">
          07:37 a. m.
          <br />
          26/10/2020
        </button>
        <button aria-label="Notificaciones" className="relative mr-[18px] mb-[4px] h-[28px] w-[36px]">
          <Svg w={24} h={24}>
            <path d="M0 0h24v19h-8l-5 5v-5H0z" fill="#fff" />
            <path d="M4 5h16M4 9.500h16M4 14h10" stroke="#444" strokeWidth="1.400" />
          </Svg>
          <span className="absolute top-[12px] left-[12px] flex size-[24px] items-center justify-center rounded-full border border-[#8a8a8a] bg-[#333] text-[15px] font-bold">2</span>
        </button>
        <span className="mr-[6px] h-[60px] w-[2px] bg-[#6a6a6a]" />
      </div>
    </footer>
  );
}

export default function App() {
  return (
    <div className="flex h-screen flex-col overflow-hidden bg-[#dedede] font-['Open_Sans','Noto_Sans',sans-serif]">
      <TitleBar />
      <RibbonTabs />
      <Ribbon />
      <FormulaBar />
      <SensitivityBar />
      <div className="h-[4px] shrink-0 border-b border-[#a2a7b3]" />
      <main className="flex min-h-0 flex-1">
        <Sheet />
        <VerticalScroll />
      </main>
      <SheetTabs />
      <StatusBar />
      <Taskbar />
    </div>
  );
}
